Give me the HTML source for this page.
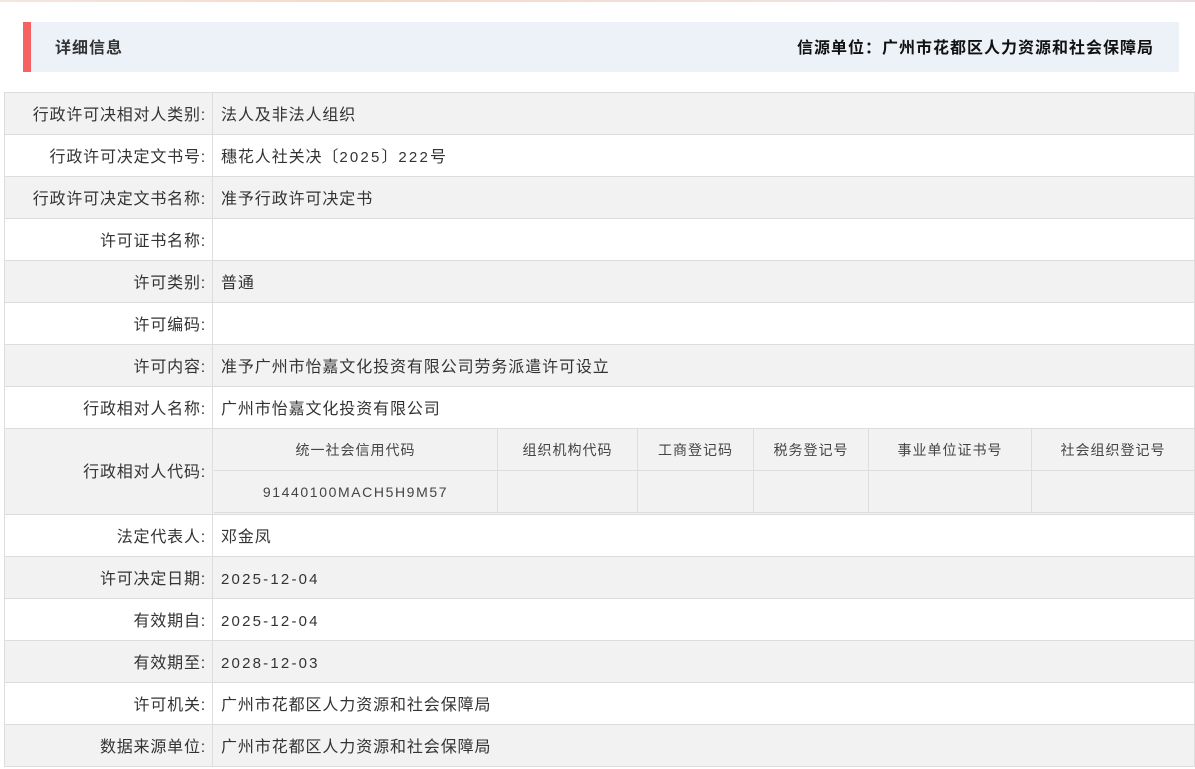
<!DOCTYPE html>
<html><head><meta charset="utf-8"><style>
*{margin:0;padding:0;box-sizing:border-box}
body{width:1195px;height:763px;overflow:hidden;background:#fff;font-family:"Liberation Sans","Noto Sans CJK SC",sans-serif;position:relative}
.top{position:absolute;left:0;top:0;width:1195px;height:2px;background:linear-gradient(90deg,#f3e6df,#f6d9c8 30%,#efe2e2 70%,#e9dede)}
.hd{position:absolute;left:23px;top:22px;width:1156px;height:50px;background:#edf2f9;border-left:8px solid #f56262}
.hd .l{position:absolute;left:24px;top:12px;font-size:16px;font-weight:bold;color:#333;letter-spacing:1px}
.hd .r{position:absolute;right:25px;top:12px;font-size:16px;font-weight:bold;color:#111;letter-spacing:1px}
.row{position:absolute;left:4px;width:1191px;height:43px;border:1px solid #ddd;font-size:16px;color:#333;letter-spacing:0.9px}
.g{background:#f2f2f2}.w{background:#fff}
.lab{position:absolute;left:0;top:0;width:208px;height:100%;border-right:1px solid #ddd;text-align:right;padding-right:6px;padding-top:2px;line-height:42px;letter-spacing:0.8px}
.val{position:absolute;left:216px;top:2px;line-height:42px}
.sub{position:absolute;left:209px;top:0;width:981px;height:85px}
.c{position:absolute;height:42px;border-right:1px solid #ddd;border-bottom:1px solid #ddd;text-align:center;line-height:42px;font-size:14px;color:#444;letter-spacing:1px}
.num{font-size:15px;letter-spacing:2.2px}
.c.num{font-size:14px;letter-spacing:1.6px}
</style></head><body>
<div class="top"></div>
<div class="hd"><span class="l">详细信息</span><span class="r">信源单位：广州市花都区人力资源和社会保障局</span></div>

<div class="row g" style="top:92px"><div class="lab">行政许可决相对人类别:</div><div class="val">法人及非法人组织</div></div>
<div class="row w" style="top:134px"><div class="lab">行政许可决定文书号:</div><div class="val">穗花人社关决〔<span class="num">2025</span>〕<span class="num">222</span>号</div></div>
<div class="row g" style="top:176px"><div class="lab">行政许可决定文书名称:</div><div class="val">准予行政许可决定书</div></div>
<div class="row w" style="top:218px"><div class="lab">许可证书名称:</div><div class="val"></div></div>
<div class="row g" style="top:260px"><div class="lab">许可类别:</div><div class="val">普通</div></div>
<div class="row w" style="top:302px"><div class="lab">许可编码:</div><div class="val"></div></div>
<div class="row g" style="top:344px"><div class="lab">许可内容:</div><div class="val">准予广州市怡嘉文化投资有限公司劳务派遣许可设立</div></div>
<div class="row w" style="top:386px"><div class="lab">行政相对人名称:</div><div class="val">广州市怡嘉文化投资有限公司</div></div>
<div class="row g" style="top:428px;height:87px"><div class="lab" style="line-height:85px;padding-top:1px">行政相对人代码:</div>
<div class="sub">
<div class="c" style="left:0;top:0;width:284px">统一社会信用代码</div>
<div class="c" style="left:284px;top:0;width:140px">组织机构代码</div>
<div class="c" style="left:424px;top:0;width:116px">工商登记码</div>
<div class="c" style="left:540px;top:0;width:115px">税务登记号</div>
<div class="c" style="left:655px;top:0;width:163px">事业单位证书号</div>
<div class="c" style="left:818px;top:0;width:163px">社会组织登记号</div>
<div class="c num" style="left:0;top:42px;width:284px">91440100MACH5H9M57</div>
<div class="c" style="left:284px;top:42px;width:140px"></div>
<div class="c" style="left:424px;top:42px;width:116px"></div>
<div class="c" style="left:540px;top:42px;width:115px"></div>
<div class="c" style="left:655px;top:42px;width:163px"></div>
<div class="c" style="left:818px;top:42px;width:163px"></div>
</div></div>
<div class="row w" style="top:514px"><div class="lab">法定代表人:</div><div class="val">邓金凤</div></div>
<div class="row g" style="top:556px"><div class="lab">许可决定日期:</div><div class="val num">2025-12-04</div></div>
<div class="row w" style="top:598px"><div class="lab">有效期自:</div><div class="val num">2025-12-04</div></div>
<div class="row g" style="top:640px"><div class="lab">有效期至:</div><div class="val num">2028-12-03</div></div>
<div class="row w" style="top:682px"><div class="lab">许可机关:</div><div class="val">广州市花都区人力资源和社会保障局</div></div>
<div class="row g" style="top:724px"><div class="lab">数据来源单位:</div><div class="val">广州市花都区人力资源和社会保障局</div></div>
</body></html>
